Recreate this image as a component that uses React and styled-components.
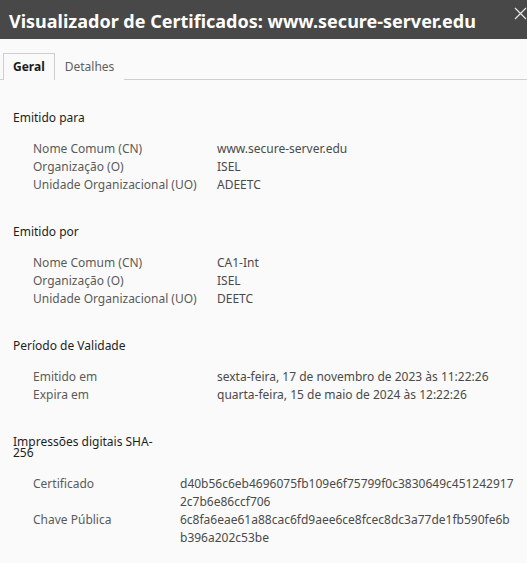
import React from "react";
import styled, { createGlobalStyle } from "styled-components";

const Global = createGlobalStyle`
  html, body { margin: 0; padding: 0; background: #fafafa; }
  body { font-family: "Noto Sans", "Open Sans", sans-serif; }
`;

const Window = styled.div`
  width: 527px;
  height: 563px;
  background: #fafafa;
  overflow: hidden;
`;

const TitleBar = styled.div`
  position: relative;
  height: 39px;
  background: #484848;
  color: #ffffff;
  font-weight: 700;
  font-size: 18px;
  display: flex;
  align-items: center;
  padding-left: 9px;
  padding-top: 3px;
  box-sizing: border-box;
  white-space: nowrap;
`;

const Close = styled.svg`
  position: absolute;
  top: 7px;
  right: 0;
`;

const Tabs = styled.div`
  display: flex;
  margin-top: 14px;
  padding-left: 3px;
  border-bottom: 1px solid #cfcfcf;
  height: 26px;
`;

const Tab = styled.div`
  box-sizing: border-box;
  height: 27px;
  padding: 0 9px 1px 9px;
  font-size: 12px;
  display: flex;
  align-items: center;
  color: ${(p) => (p.$active ? "#1a1a1a" : "#606060")};
  font-weight: ${(p) => (p.$active ? 700 : 400)};
  background: #fafafa;
  border: 1px solid ${(p) => (p.$active ? "#cfcfcf" : "transparent")};
  border-bottom: none;
`;

const Content = styled.div`
  padding: 32px 11px 0 13px;
`;

const Section = styled.section`
  margin-bottom: 32px;
`;

const Heading = styled.div`
  font-size: 12px;
  line-height: 11px;
  color: #1e1e1e;
  max-width: 155px;
  margin-bottom: 17px;
`;

const Grid = styled.div`
  display: grid;
  grid-template-columns: ${(p) => p.$labelWidth}px 1fr;
  padding-left: 20px;
  font-size: 12px;
  line-height: 18px;
`;

const Label = styled.div`
  color: #5a5a5a;
`;

const Value = styled.div`
  color: #4a4a4a;
  word-break: break-all;
`;

const sections = [
  {
    title: "Emitido para",
    labelWidth: 184,
    rows: [
      ["Nome Comum (CN)", "www.secure-server.edu"],
      ["Organização (O)", "ISEL"],
      ["Unidade Organizacional (UO)", "ADEETC"],
    ],
  },
  {
    title: "Emitido por",
    labelWidth: 184,
    rows: [
      ["Nome Comum (CN)", "CA1-Int"],
      ["Organização (O)", "ISEL"],
      ["Unidade Organizacional (UO)", "DEETC"],
    ],
  },
  {
    title: "Período de Validade",
    labelWidth: 184,
    rows: [
      ["Emitido em", "sexta-feira, 17 de novembro de 2023 às 11:22:26"],
      ["Expira em", "quarta-feira, 15 de maio de 2024 às 12:22:26"],
    ],
  },
  {
    title: "Impressões digitais SHA-256",
    labelWidth: 147,
    rows: [
      ["Certificado", "d40b56c6eb4696075fb109e6f75799f0c3830649c4512429172c7b6e86ccf706"],
      ["Chave Pública", "6c8fa6eae61a88cac6fd9aee6ce8fcec8dc3a77de1fb590fe6bb396a202c53be"],
    ],
  },
];

export default function App() {
  return (
    <>
      <Global />
      <Window>
        <TitleBar>
          Visualizador de Certificados: www.secure-server.edu
          <Close width="14" height="14" viewBox="0 0 14 14">
            <path d="M2 1 L13 12 M13 1 L2 12" stroke="#e6e6e6" strokeWidth="1.2" fill="none" />
          </Close>
        </TitleBar>
        <Tabs>
          <Tab $active>Geral</Tab>
          <Tab>Detalhes</Tab>
        </Tabs>
        <Content>
          {sections.map((s) => (
            <Section key={s.title}>
              <Heading>{s.title}</Heading>
              <Grid $labelWidth={s.labelWidth}>
                {s.rows.map(([l, v]) => (
                  <React.Fragment key={l}>
                    <Label>{l}</Label>
                    <Value>{v}</Value>
                  </React.Fragment>
                ))}
              </Grid>
            </Section>
          ))}
        </Content>
      </Window>
    </>
  );
}
